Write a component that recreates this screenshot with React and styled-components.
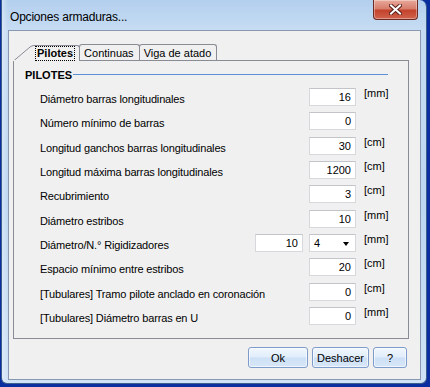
import React from 'react';
import styled, { createGlobalStyle } from 'styled-components';

const GlobalStyle = createGlobalStyle`
  html, body {
    margin: 0;
    padding: 0;
    background: #0a2d9f;
  }
  body {
    font-family: "Liberation Sans", Arial, sans-serif;
    font-size: 11px;
    color: #000;
  }
`;

const Desktop = styled.div`
  width: 430px;
  height: 387px;
  padding: 0 3px 0 1px;
  box-sizing: border-box;
  overflow: hidden;
`;

const Frame = styled.div`
  width: 426px;
  height: 384px;
  box-sizing: border-box;
  border: 1px solid #3d5f8e;
  border-top: none;
  border-radius: 0 7px 6px 6px;
  background:
    linear-gradient(90deg, rgba(255,255,255,0.35) 0px, rgba(255,255,255,0) 6px),
    linear-gradient(180deg, #b3cfee 0px, #c6dcf3 30px, #bdd6f1 200px, #cfe2f6 384px);
  padding: 0 5px 3px 6px;
  display: flex;
  flex-direction: column;
`;

const TitleBar = styled.div`
  height: 30px;
  display: flex;
  align-items: flex-start;
  justify-content: space-between;
`;

const Title = styled.div`
  font-family: "Liberation Sans", Arial, sans-serif;
  font-size: 12px;
  letter-spacing: -0.2px;
  padding: 10px 0 0 2px;
  color: #000;
`;

const CloseButton = styled.div`
  width: 45px;
  height: 20px;
  margin-right: 3px;
  box-sizing: border-box;
  border: 1px solid #6b2a22;
  border-top: none;
  border-radius: 0 0 4px 4px;
  background: linear-gradient(180deg, #e9a99b 0%, #d77e6d 45%, #c4432d 55%, #d0634d 100%);
  box-shadow: inset 0 0 0 1px rgba(255,255,255,0.35);
  display: flex;
  align-items: center;
  justify-content: center;
`;

const Client = styled.div`
  flex: 1;
  background: #f0f0f0;
  border: 1px solid #8798b0;
  padding: 12px 12px 0 4px;
  display: flex;
  flex-direction: column;
`;

const TabStrip = styled.div`
  display: flex;
  align-items: flex-end;
  height: 17px;
`;

const Slant = styled.svg`
  display: block;
  width: 21px;
  height: 17px;
  margin-bottom: -1px;
  position: relative;
  z-index: 2;
`;

const Tab = styled.div`
  height: 16px;
  box-sizing: border-box;
  border: 1px solid #898c95;
  border-left: ${p => (p.$active ? 'none' : '1px solid #898c95')};
  border-bottom: none;
  border-radius: ${p => (p.$active ? '0 3px 0 0' : '3px 3px 0 0')};
  background: #f0f0f0;
  padding: 0 5px 0 ${p => (p.$active ? 2 : 4)}px;
  margin-bottom: ${p => (p.$active ? -1 : 0)}px;
  margin-left: ${p => (p.$active ? 0 : -1)}px;
  position: relative;
  z-index: ${p => (p.$active ? 2 : 1)};
  display: flex;
  align-items: center;
  white-space: nowrap;
`;

const FocusLabel = styled.span`
  font-weight: bold;
  outline: 1px dotted #000;
  padding: 0 1px;
  line-height: 13px;
`;

const Panel = styled.div`
  width: 396px;
  height: 279px;
  box-sizing: border-box;
  border: 1px solid #898c95;
  padding: 7px 0 0 26px;
  display: flex;
  flex-direction: column;
`;

const GroupHeader = styled.div`
  display: flex;
  align-items: center;
  margin: 0 20px 7px -15px;
  height: 13px;
`;

const GroupTitle = styled.span`
  font-weight: bold;
  padding-right: 1px;
`;

const GroupLine = styled.div`
  flex: 1;
  height: 1px;
  background: #5b8fd6;
`;

const Row = styled.div`
  display: flex;
  align-items: flex-start;
  height: 24.33px;
`;

const Label = styled.div`
  flex: 1;
  padding-top: 5px;
  line-height: 13px;
  letter-spacing: -0.15px;
  white-space: nowrap;
`;

const Field = styled.div`
  width: ${p => p.$w || 47}px;
  height: 18px;
  box-sizing: border-box;
  background: #fff;
  border: 1px solid #d6d8dc;
  border-top-color: #c2c4c9;
  display: flex;
  align-items: center;
  justify-content: flex-end;
  padding: 0 4px;
  margin-left: ${p => p.$gap || 0}px;
`;

const Combo = styled(Field)`
  justify-content: space-between;
  padding: 0 6px 0 4px;
`;

const Arrow = styled.span`
  width: 0;
  height: 0;
  border-left: 3.5px solid transparent;
  border-right: 3.5px solid transparent;
  border-top: 4px solid #000;
  margin-top: 2px;
`;

const Unit = styled.div`
  width: 44px;
  margin-left: 8px;
  margin-top: -1px;
  line-height: 13px;
`;

const ButtonBar = styled.div`
  display: flex;
  justify-content: flex-end;
  gap: 4px;
  padding: 8px 1px 0 0;
`;

const Button = styled.div`
  width: ${p => p.$w}px;
  height: 21px;
  box-sizing: border-box;
  border: 1px solid #7d9ccb;
  border-radius: 3px;
  background: linear-gradient(180deg, #f1f7fe 0%, #e0edfb 48%, #cde0f6 52%, #d8e7f8 100%);
  box-shadow: inset 0 0 0 1px rgba(255,255,255,0.6);
  display: flex;
  align-items: center;
  justify-content: center;
`;

const rows = [
  { label: 'Diámetro barras longitudinales', value: '16', unit: '[mm]' },
  { label: 'Número mínimo de barras', value: '0', unit: '' },
  { label: 'Longitud ganchos barras longitudinales', value: '30', unit: '[cm]' },
  { label: 'Longitud máxima barras longitudinales', value: '1200', unit: '[cm]' },
  { label: 'Recubrimiento', value: '3', unit: '[cm]' },
  { label: 'Diámetro estribos', value: '10', unit: '[mm]' },
  { label: 'Diámetro/N.° Rigidizadores', value: '10', combo: '4', unit: '[mm]' },
  { label: 'Espacio mínimo entre estribos', value: '20', unit: '[cm]' },
  { label: '[Tubulares] Tramo pilote anclado en coronación', value: '0', unit: '[cm]' },
  { label: '[Tubulares] Diámetro barras en U', value: '0', unit: '[mm]' },
];

const CloseIcon = () => (
  <svg width="13" height="11" viewBox="0 0 13 11">
    <path d="M2 1.5 L11 9.5 M11 1.5 L2 9.5" stroke="#5a2018" strokeWidth="4" strokeLinecap="square" />
    <path d="M2 1.5 L11 9.5 M11 1.5 L2 9.5" stroke="#fff" strokeWidth="2" strokeLinecap="square" />
  </svg>
);

export default function App() {
  return (
    <Desktop>
      <GlobalStyle />
      <Frame>
        <TitleBar>
          <Title>Opciones armaduras...</Title>
          <CloseButton><CloseIcon /></CloseButton>
        </TitleBar>
        <Client>
          <TabStrip>
            <Slant viewBox="0 0 21 17">
              <path d="M0.5 17 L17 3 Q19 1.5 21 1.5" fill="#f0f0f0" stroke="#898c95" strokeWidth="1" />
              <rect x="0" y="16" width="21" height="1" fill="#f0f0f0" />
            </Slant>
            <Tab $active><FocusLabel>Pilotes</FocusLabel></Tab>
            <Tab>Continuas</Tab>
            <Tab>Viga de atado</Tab>
          </TabStrip>
          <Panel>
            <GroupHeader>
              <GroupTitle>PILOTES</GroupTitle>
              <GroupLine />
            </GroupHeader>
            {rows.map((r, i) => (
              <Row key={i}>
                <Label>{r.label}</Label>
                {r.combo ? (
                  <>
                    <Field $w={48}>{r.value}</Field>
                    <Combo $gap={6}>{r.combo}<Arrow /></Combo>
                  </>
                ) : (
                  <Field>{r.value}</Field>
                )}
                <Unit>{r.unit}</Unit>
              </Row>
            ))}
          </Panel>
          <ButtonBar>
            <Button $w={60}>Ok</Button>
            <Button $w={57}>Deshacer</Button>
            <Button $w={34}>?</Button>
          </ButtonBar>
        </Client>
      </Frame>
    </Desktop>
  );
}
